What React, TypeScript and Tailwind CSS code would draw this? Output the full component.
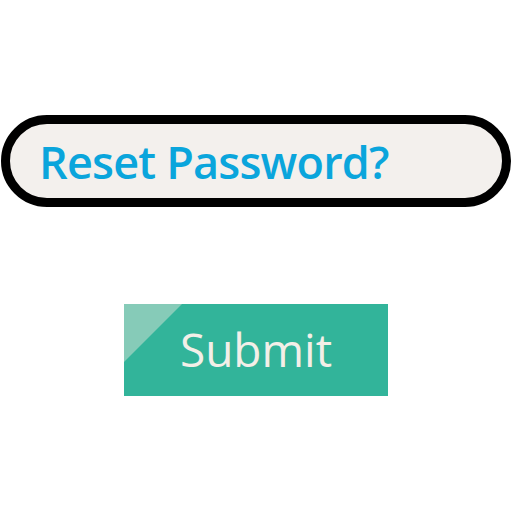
const App = () => {
  return (
    <div className="w-[512px] h-[512px] bg-white flex flex-col items-center pt-[115px]">
      {/* input pill */}
      <div className="w-[510px] h-[92px] rounded-full border-[9px] border-black bg-[#f3f0ed] flex items-center pl-[29px]">
        <span
          className="text-[#0aa5dc] text-[45px] font-semibold leading-none tracking-[-0.8px]"
          style={{ fontFamily: '"Open Sans", sans-serif' }}
        >
          Reset Password?
        </span>
      </div>

      {/* submit button */}
      <div className="relative mt-[97px] w-[264px] h-[92px] bg-[#32b49a] flex items-center justify-center overflow-hidden">
        <svg className="absolute left-0 top-0" width="58" height="58" viewBox="0 0 58 58">
          <polygon points="0,0 58,0 0,58" fill="#86cbb8" />
        </svg>
        <span
          className="relative text-[#f3efe8] text-[46px] leading-none pb-[2px]"
          style={{ fontFamily: '"Open Sans", sans-serif' }}
        >
          Submit
        </span>
      </div>
    </div>
  );
};

export default App;
